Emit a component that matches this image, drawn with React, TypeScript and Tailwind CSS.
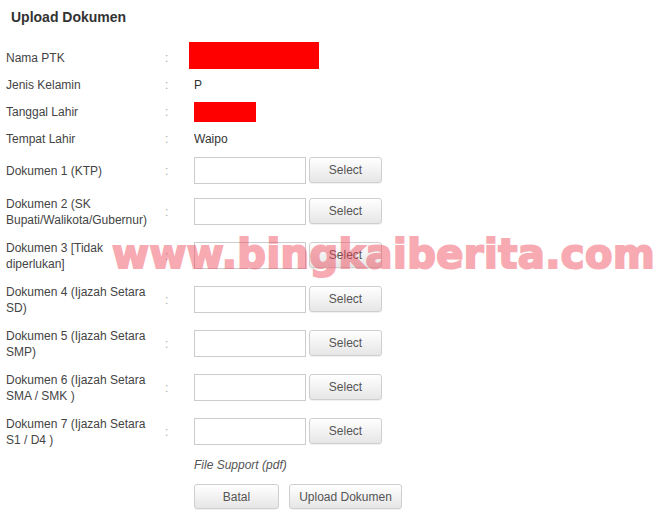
const infoText = "text-[12px] leading-[16px] text-[#444]";

const documents = [
  "Dokumen 1 (KTP)",
  "Dokumen 2 (SK Bupati/Walikota/Gubernur)",
  "Dokumen 3 [Tidak diperlukan]",
  "Dokumen 4 (Ijazah Setara SD)",
  "Dokumen 5 (Ijazah Setara SMP)",
  "Dokumen 6 (Ijazah Setara SMA / SMK )",
  "Dokumen 7 (Ijazah Setara S1 / D4 )",
];

const Colon = () => (
  <div className="w-[33px] shrink-0 pl-[9px] text-[12px] leading-[16px] text-[#aaa]">:</div>
);

const GrayButton = ({ label, className }: { label: string; className: string }) => (
  <button
    type="button"
    className={`rounded-[3px] border border-[#cfcfcf] bg-gradient-to-b from-white to-[#e6e6e6] text-[12px] text-[#555] shadow-[0_1px_1px_rgba(0,0,0,0.06)] ${className}`}
  >
    {label}
  </button>
);

const getDocumentRows = () => {
  return documents.map((doc, i) => (
    <div
      key={doc}
      className={`flex items-center ${i === 0 ? "h-[27px]" : "h-[33px]"}`}
    >
      <div className={`w-[150px] shrink-0 ${infoText}`}>{doc}</div>
      <Colon />
      <div className="flex gap-[3px] pl-[5px]">
        <div className="h-[27px] w-[112px] border border-[#ccc] bg-white"></div>
        <GrayButton label="Select" className="h-[26px] w-[73px]" />
      </div>
    </div>
  ));
};

const App = () => {
  return (
    <div
      className="relative h-[515px] w-[667px] overflow-hidden bg-white px-[6px]"
      style={{ fontFamily: '"Liberation Sans", Arial, sans-serif' }}
    >
      <h2 className="mt-[7px] pl-[5px] text-[14px] font-bold leading-[20px] text-[#333]">
        Upload Dokumen
      </h2>

      <div className="mt-[15px] flex h-[27px] items-start">
        <div className={`mt-[8px] w-[150px] shrink-0 ${infoText}`}>Nama PTK</div>
        <div className="mt-[8px]">
          <Colon />
        </div>
        <div className="h-[27px] w-[130px] bg-[#ff0000]"></div>
      </div>

      <div className="mt-[8px] flex h-[16px] items-center">
        <div className={`w-[150px] shrink-0 ${infoText}`}>Jenis Kelamin</div>
        <Colon />
        <div className="pl-[5px] text-[12px] leading-[16px] text-[#333]">P</div>
      </div>

      <div className="mt-[9px] flex h-[20px] items-center">
        <div className={`w-[150px] shrink-0 ${infoText}`}>Tanggal Lahir</div>
        <Colon />
        <div className="ml-[5px] h-[20px] w-[62px] bg-[#ff0000]"></div>
      </div>

      <div className="mt-[9px] flex h-[16px] items-center">
        <div className={`w-[150px] shrink-0 ${infoText}`}>Tempat Lahir</div>
        <Colon />
        <div className="pl-[5px] text-[12px] leading-[16px] text-[#333]">Waipo</div>
      </div>

      <div className="mt-[10px] flex flex-col gap-[11px]">{getDocumentRows()}</div>

      <div className="mt-[9px] pl-[188px] text-[12px] italic leading-[16px] text-[#555]">
        File Support (pdf)
      </div>

      <div className="mt-[11px] flex gap-[10px] pl-[188px]">
        <GrayButton label="Batal" className="h-[25px] w-[85px]" />
        <GrayButton label="Upload Dokumen" className="h-[25px] w-[113px]" />
      </div>

      {/* watermark */}
      <div
        className="pointer-events-none absolute left-[112px] top-[234px] whitespace-nowrap text-[40px] font-bold leading-[40px] tracking-[0.45px] text-[#ee4455] opacity-45 [-webkit-text-stroke:2px_#ee4455]"
        style={{ fontFamily: '"DejaVu Sans", sans-serif' }}
      >
        www.bingkaiberita.com
      </div>
    </div>
  );
};

export default App;
